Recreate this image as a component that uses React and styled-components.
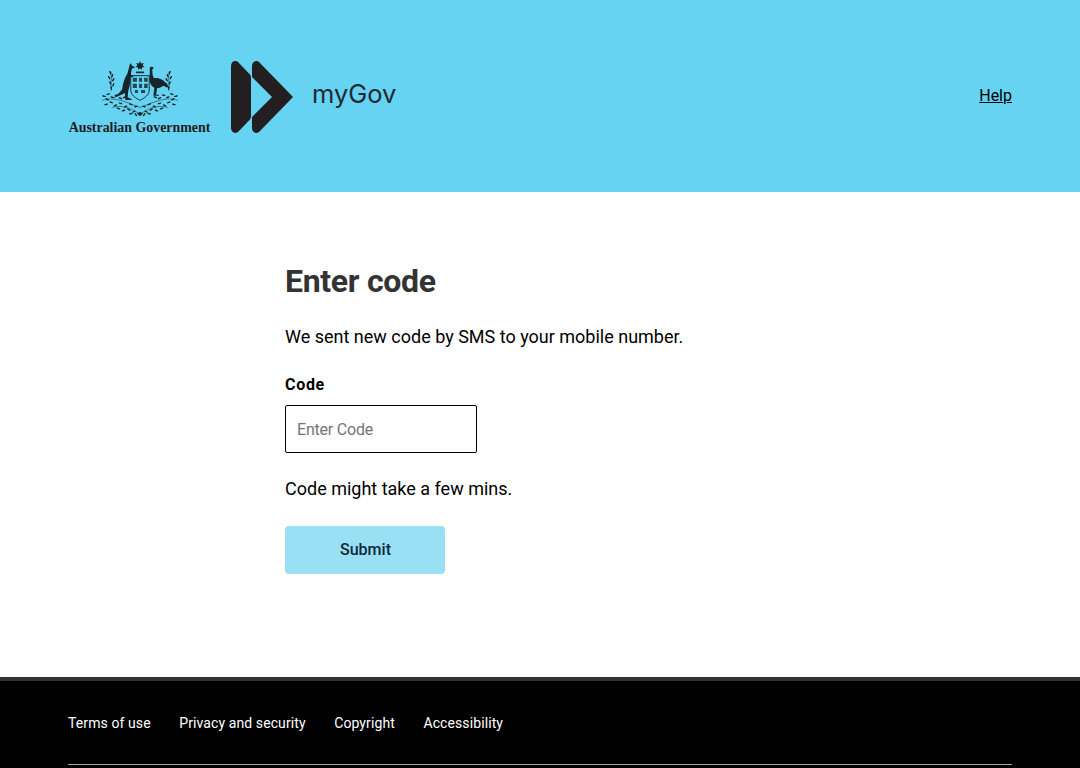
import React from "react";
import styled, { createGlobalStyle } from "styled-components";

const GlobalStyle = createGlobalStyle`
  html, body {
    margin: 0;
    padding: 0;
    height: 768px;
    overflow: hidden;
    background: #fff;
    font-family: Roboto, "Liberation Sans", sans-serif;
  }
`;

const Header = styled.header`
  height: 192px;
  background: #65d3f1;
  padding: 0 68px;
  display: flex;
  align-items: center;
  justify-content: space-between;
`;

const Logos = styled.div`
  display: flex;
  align-items: flex-start;
  margin-top: 1px;
`;

const Crest = styled.div`
  width: 143px;
  height: 72px;
  display: flex;
  flex-direction: column;
  align-items: center;
  margin-top: -2px;
`;

const CrestArt = styled.svg`
  display: block;
  flex: none;
`;

const CrestName = styled.span`
  font-family: "Liberation Serif", serif;
  font-weight: 700;
  font-size: 13.9px;
  line-height: 13px;
  color: #1d1d1f;
  white-space: nowrap;
  margin-top: 2px;
`;

const BrandMark = styled.svg`
  display: block;
  margin-left: 20px;
  flex: none;
`;

const BrandName = styled.span`
  font-family: Inter, sans-serif;
  font-size: 25.5px;
  line-height: 30px;
  color: #1e2a33;
  margin: 18px 0 0 18px;
`;

const HelpLink = styled.a`
  color: #000;
  font-size: 16px;
  text-decoration: underline;
  margin-top: -2px;
`;

const Main = styled.main`
  height: 485px;
  box-sizing: border-box;
  padding: 68px 0 0 285px;
`;

const Title = styled.h1`
  margin: 0;
  font-size: 32px;
  line-height: 42px;
  font-weight: 700;
  letter-spacing: -0.3px;
  color: #333;
`;

const Text = styled.p`
  margin: ${(p) => p.$top}px 0 0;
  font-size: 18px;
  line-height: 28px;
  color: #000;
`;

const Label = styled.label`
  display: block;
  margin-top: 22px;
  font-size: 16px;
  line-height: 24px;
  font-weight: 700;
  letter-spacing: 0.7px;
  color: #000;
`;

const CodeInput = styled.input`
  display: block;
  box-sizing: border-box;
  width: 192px;
  height: 48px;
  margin-top: 8px;
  padding: 0 11px;
  border: 1px solid #000;
  border-radius: 2px;
  font-family: inherit;
  font-size: 16px;
  letter-spacing: -0.2px;
  outline: none;

  &::placeholder {
    color: #757575;
    opacity: 1;
  }
`;

const SubmitButton = styled.button`
  display: block;
  width: 160px;
  height: 48px;
  margin-top: 23px;
  padding: 0 0 2px 1px;
  border: 0;
  border-radius: 4px;
  background: #99e0f5;
  color: #0a2a3c;
  font-family: inherit;
  font-size: 16px;
  font-weight: 500;
`;

const Footer = styled.footer`
  border-top: 4px solid #333;
  background: #000;
  height: 87px;
  padding: 0 68px;
`;

const FooterLinks = styled.nav`
  display: flex;
  gap: 28.5px;
  height: 84px;
  padding-top: 33px;
  box-sizing: border-box;
  border-bottom: 1px solid #a6a6a6;
`;

const FooterLink = styled.a`
  color: #fff;
  font-size: 14px;
  line-height: 18px;
  letter-spacing: 0.1px;
  white-space: nowrap;
`;

// foliage of the crest, [x, y, angle]
const LEAVES = [
  [8, 13, 70], [10, 16, 110], [7, 18, 60], [11, 20, 120], [8, 23, 70], [11, 25, 110], [9, 28, 80],
  [66, 13, 110], [64, 16, 70], [67, 18, 120], [63, 20, 60], [66, 23, 110], [63, 25, 70], [65, 28, 100],
  [2, 36, 10], [6, 34, -20], [10, 37, 20], [14, 35, -15], [18, 38, 25], [22, 37, -20], [5, 39, 30],
  [72, 36, -10], [68, 34, 20], [64, 37, -20], [60, 35, 15], [56, 38, -25], [52, 37, 20], [69, 39, -30],
  [4, 44, -10], [9, 42, 20], [13, 45, -25], [18, 43, 15], [23, 46, -20], [28, 44, 25], [33, 46, -15],
  [70, 44, 10], [65, 42, -20], [61, 45, 25], [56, 43, -15], [51, 46, 20], [46, 44, -25], [41, 46, 15],
  [16, 48, 20], [21, 50, -20], [26, 49, 30], [31, 51, -25], [58, 48, -20], [53, 50, 20], [48, 49, -30], [43, 51, 25],
  [33, 54, 50], [41, 54, -50], [28, 53, -10], [46, 53, 10],
];

function CoatOfArms() {
  return (
    <CrestArt width="76" height="60" viewBox="0 0 74 58" fill="#17242c" aria-hidden="true">
      {LEAVES.map(([x, y, a], i) => (
        <ellipse key={i} cx={x} cy={y} rx="1.9" ry="0.75" transform={`rotate(${a} ${x} ${y})`} />
      ))}
      <path d="M9 12 V31 M65 12 V31" stroke="#17242c" strokeWidth="0.5" fill="none" />
      <path d="M0 40 C12 36 24 42 37 47 C50 42 62 36 74 40 M10 47 C20 44 30 48 37 54 C44 48 54 44 64 47" stroke="#17242c" strokeWidth="0.5" fill="none" />
      <path d="M37 55.5 l-3 -3 3 -1 3 1z" />
      {/* star and torse */}
      <path d="M37 2 l1.2 2.2 2.4-.5-1 2.3 1.8 1.6-2.5.4-.2 2.4-1.7-1.7-1.7 1.7-.2-2.4-2.5-.4 1.8-1.6-1-2.3 2.4.5z" />
      <path d="M33 12 h8 v1.6 h-8z" />
      {/* shield */}
      <path d="M28 16 h18 v14 c0 5 -5 8 -9 10 c-4 -2 -9 -5 -9 -10z" fill="none" stroke="#17242c" strokeWidth="0.9" />
      <path d="M30 18 h4 v4 h-4z M36 18 h3 v4 h-3z M41 18 h3.500 v4 h-3.500z M30 24 h4 v4 h-4z M36 24 h3 v4 h-3z M41 24 h3.500 v4 h-3.500z M32 30 h3 v3 h-3z M38 30 h4 v3 h-4z" opacity="0.8" />
      {/* kangaroo */}
      <path d="M27 5 l1.500 -1 .4 2 c1.500 .5 2.800 1.300 3.300 2.300 l-2.900 .7 c-.5 2 -1 4 -1.300 6 l2.600 1.500 -.6 1 -2.300 -.5 c0 5 -.7 10 -2.200 14 l-.5 6 3.700 1.700 .1 1.100 h-6 l-.5 -7 c-3 1.500 -7 3.500 -11.500 5 c3.500 -2.500 7 -5.500 8.800 -8.500 c.7 -6 2.300 -11 5.200 -15.500 c.6 -2 1 -4.500 1.700 -6.300z" />
      {/* emu */}
      <path d="M46.500 8 c1.600 -1.300 3.700 -.6 3.700 1 l-1.200 .7 c-.1 3.500 .3 7 1.600 8.800 c4.500 -.9 9.400 1.600 11.900 5 c1 1.500 2 3 3.500 4.300 c-2.400 -.2 -4.500 -.8 -6.300 -2 c-1.700 1.500 -3.900 2.300 -6 2.300 l-1 6.400 h2.800 v1 h-5.500 l1 -7.800 c-3.300 -1.500 -5 -5.500 -4.700 -10.500 c.3 -3 .2 -6.300 .2 -9.200z" />
    </CrestArt>
  );
}

export default function App() {
  return (
    <>
      <GlobalStyle />
      <Header>
        <Logos>
          <Crest>
            <CoatOfArms />
            <CrestName>Australian Government</CrestName>
          </Crest>
          <BrandMark width="63" height="72" viewBox="0 0 63 72" aria-hidden="true">
            <path
              d="M0 5 C0 0.500 4.500 -1.500 7.500 1.500 L18.500 13 C19.500 14 20 15.500 20 17 V55 C20 56.500 19.500 58 18.500 59 L7.500 70.500 C4.500 73.500 0 71.500 0 67Z"
              fill="#231f20"
            />
            <path
              d="M21 5 C21 0.500 25.500 -1.500 28.500 1.500 L62 36 L28.500 70.500 C25.500 73.500 21 71.500 21 67 V56 L41 36 L21 16Z"
              fill="#231f20"
            />
          </BrandMark>
          <BrandName>myGov</BrandName>
        </Logos>
        <HelpLink href="#">Help</HelpLink>
      </Header>
      <Main>
        <form onSubmit={(e) => e.preventDefault()}>
          <Title>Enter code</Title>
          <Text $top={21}>We sent new code by SMS to your mobile number.</Text>
          <Label htmlFor="code">Code</Label>
          <CodeInput id="code" placeholder="Enter Code" />
          <Text $top={22}>Code might take a few mins.</Text>
          <SubmitButton type="submit">Submit</SubmitButton>
        </form>
      </Main>
      <Footer>
        <FooterLinks>
          <FooterLink>Terms of use</FooterLink>
          <FooterLink>Privacy and security</FooterLink>
          <FooterLink>Copyright</FooterLink>
          <FooterLink>Accessibility</FooterLink>
        </FooterLinks>
      </Footer>
    </>
  );
}
